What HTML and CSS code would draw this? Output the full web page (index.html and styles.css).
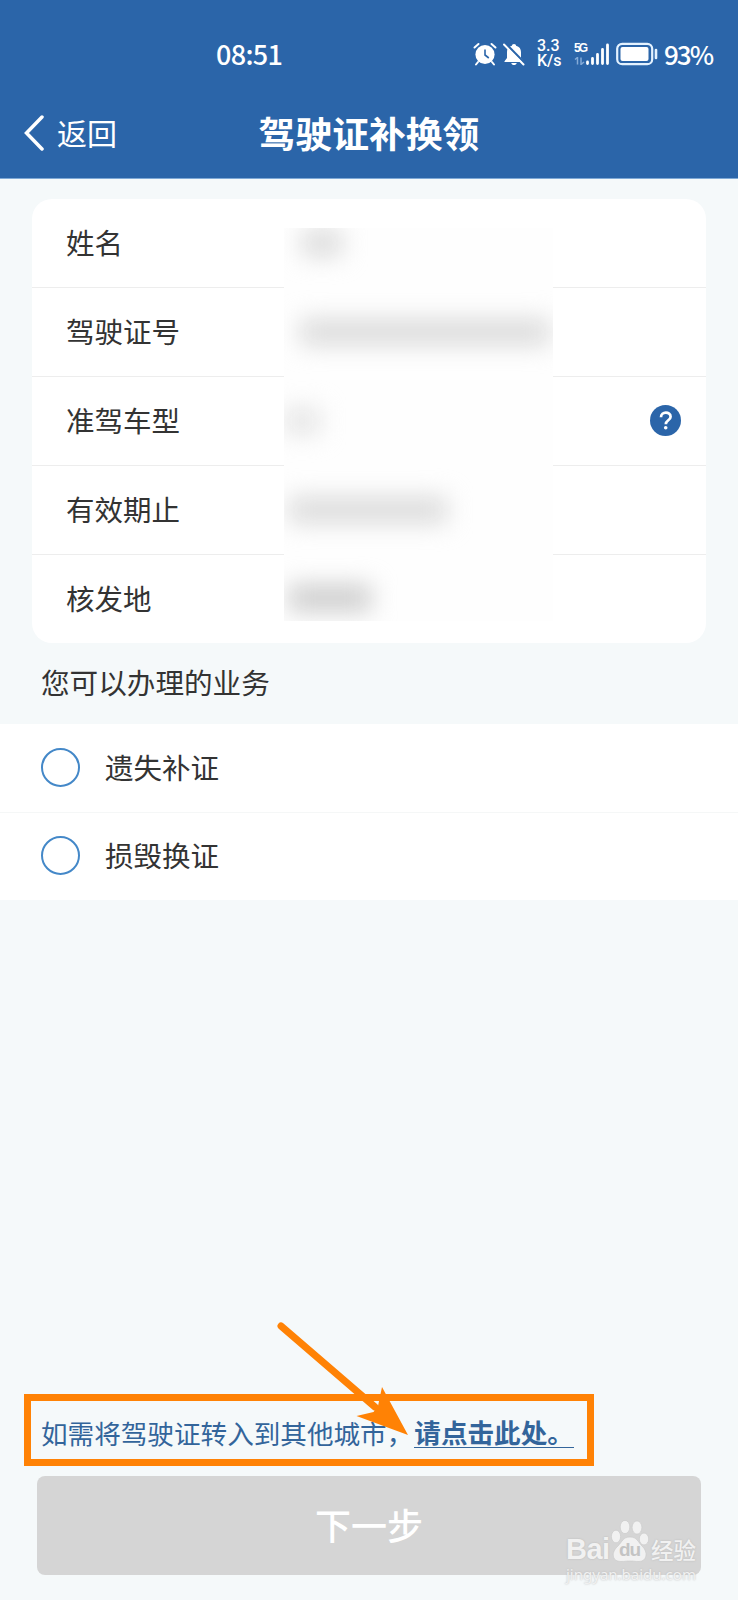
FILE: index.html
```html
<!DOCTYPE html>
<html lang="zh-CN">
<head>
  <meta charset="UTF-8">
  <title>驾驶证补换领</title>
  <link rel="stylesheet" href="styles.css">
</head>
<body>

<header class="header">
  <div class="status">
    <span class="time">08:51</span>
    <svg class="alarm" width="24" height="24" viewBox="0 0 24 24">
      <circle cx="12" cy="12.5" r="9.6" fill="#fff"/>
      <path d="M1.5 5.5 5.5 2M22.5 5.5 18.5 2M5 20l-2 2.5M19 20l2 2.5" stroke="#fff" stroke-width="2" stroke-linecap="round"/>
      <path d="M12 7.5v5.5l3.8 3" fill="none" stroke="#2b65a9" stroke-width="1.6"/>
    </svg>
    <svg class="bell" width="22" height="24" viewBox="0 0 22 24">
      <path d="M11 2c1.3 0 2 .8 2.1 1.7C16.5 4.6 18 7 18 10v6l2.5 3.3v.7H1.5v-.7L4 16v-6c0-3 1.5-5.4 4.9-6.3C9 2.800 9.700 2 11 2zM8.300 21h5.400c-.3 1.400-1.300 2-2.700 2s-2.400-.6-2.700-2z" fill="#fff"/>
      <path d="M2.500 1.500 22 21.500" stroke="#2b65a9" stroke-width="2.4"/>
      <path d="M1 2.500 20.500 22.500" stroke="#fff" stroke-width="2" stroke-linecap="round"/>
    </svg>
    <div class="speed">
      <span>3.3</span>
      <span>K/s</span>
    </div>
    <span class="network">5G
      <svg width="11" height="8" viewBox="0 0 11 8">
        <path d="M1 2.500 3.500.5v7M7 .5v7l3-2.500" fill="none" stroke="#85abd8" stroke-width="1.500"/>
      </svg>
    </span>
    <svg class="signal" width="23" height="22" viewBox="0 0 23 22">
      <path d="M1.500 20.500v-1.500M6.500 20.500v-5M11.500 20.500v-9M16.500 20.500v-14M21.500 20.500V2" stroke="#fff" stroke-width="2.800" stroke-linecap="round"/>
    </svg>
    <svg class="battery" width="42" height="24" viewBox="0 0 42 24">
      <rect x="1.200" y="1.800" width="35" height="20.400" rx="5" fill="none" stroke="#e4f2ff" stroke-width="2.200"/>
      <rect x="4.500" y="5" width="28" height="14" rx="2" fill="#fff"/>
      <path d="M40 8v8" stroke="#e4f2ff" stroke-width="2.600" stroke-linecap="round"/>
    </svg>
    <span class="percent">93%</span>
  </div>
  <div class="navbar">
    <a class="back">
      <svg width="20" height="36" viewBox="0 0 20 36">
        <path d="M18 2 2.500 18 18 34" fill="none" stroke="#fff" stroke-width="3.500" stroke-linecap="round"/>
      </svg>
      <span>返回</span>
    </a>
    <h1>驾驶证补换领</h1>
  </div>
</header>

<main class="content">
  <section class="card">
    <div class="row">姓名</div>
    <div class="row">驾驶证号</div>
    <div class="row">准驾车型
      <svg class="help" width="31" height="31" viewBox="0 0 31 31">
        <circle cx="15.500" cy="15.500" r="15.500" fill="#2b65a9"/>
        <path d="M11 12.200c0-6 9.600-5.800 9.600-.5 0 3.700-4.800 3.500-4.800 7.500" fill="none" stroke="#fff" stroke-width="2.700"/>
        <circle cx="15.700" cy="22.700" r="1.800" fill="#fff"/>
      </svg>
    </div>
    <div class="row">有效期止</div>
    <div class="row">核发地</div>
    <!-- hidden personal data -->
    <div class="mask">
      <i class="name"></i>
      <i class="number"></i>
      <i class="type"></i>
      <i class="date"></i>
      <i class="place"></i>
    </div>
  </section>

  <h2>您可以办理的业务</h2>

  <div class="options">
    <label class="option"><span class="radio"></span><span>遗失补证</span></label>
    <label class="option"><span class="radio"></span><span>损毁换证</span></label>
  </div>
</main>

<footer class="footer">
  <div class="tip">
    <span>如需将驾驶证转入到其他城市，</span><a>请点击此处。</a>
    <svg class="arrow" width="134" height="118" viewBox="0 0 134 118">
      <path d="M4 4 98 85" stroke="#ff8205" stroke-width="7" stroke-linecap="round"/>
      <path d="M131 113 79.500 94l17-4 4.500-6 4-19z" fill="#ff8205"/>
    </svg>
  </div>
  <button class="next">下一步</button>
  <div class="watermark">
    <div class="brand">
      <span class="bai">Bai</span>
      <span class="paw">
        <svg width="38" height="42" viewBox="0 0 38 42">
          <g fill="#f1f1f1" stroke="#c8c8c8" stroke-width=".6">
            <ellipse cx="5" cy="16.500" rx="4.600" ry="6.300"/>
            <ellipse cx="14" cy="7" rx="4.800" ry="6.600"/>
            <ellipse cx="26" cy="7.500" rx="4.900" ry="6.600"/>
            <ellipse cx="33" cy="19" rx="4.700" ry="5.900"/>
            <path d="M19 17c7 0 8 5 12 9 6.500 6 5 15.500-3 15.500-4 0-5-.5-9-.5s-5 .5-9 .5c-9.500 0-10-9.500-3-15.500C11 22 12 17 19 17z"/>
          </g>
        </svg>
        <b>du</b>
      </span>
      <span class="jingyan">经验</span>
    </div>
    <div class="url">jingyan.baidu.com</div>
  </div>
</footer>

</body>
</html>
```
FILE: styles.css
```css
* {
  box-sizing: border-box;
}

body {
  margin: 0;
  width: 738px;
  height: 1600px;
  display: flex;
  flex-direction: column;
  overflow: hidden;
  background: #f5f9fa;
  color: #333;
  font-family: "Noto Sans CJK SC", sans-serif;
  font-size: 28.5px;
}

.header {
  height: 179px;
  background: #2b65a9;
  border-bottom: 1px solid #7fa9d6;
  color: #fff;
}

.status {
  display: flex;
  align-items: center;
  height: 88px;
  padding: 19px 0 0 216px;
}

.time, .percent {
  font-size: 27px;
  font-weight: 500;
  line-height: 30px;
  letter-spacing: -0.7px;
}

.time {
  width: 257px;
}

.percent {
  font-size: 26px;
  letter-spacing: -2px;
}

.alarm {
  margin-right: 6px;
}

.speed {
  display: flex;
  flex-direction: column;
  gap: 3px;
  width: 37px;
  margin-left: 12px;
  font-family: Roboto, sans-serif;
  font-size: 16px;
  font-weight: 500;
  line-height: 12px;
}

.network {
  display: flex;
  flex-direction: column;
  gap: 3px;
  width: 12px;
  font-family: "Liberation Sans", sans-serif;
  font-size: 12px;
  font-weight: bold;
  line-height: 11px;
  letter-spacing: -2px;
}

.battery {
  margin: 0 6px 0 7px;
}

.navbar {
  position: relative;
  display: flex;
  align-items: center;
  height: 90px;
}

.back {
  display: flex;
  align-items: center;
  gap: 13px;
  padding-left: 24px;
  font-size: 30px;
}

.back span {
  padding-bottom: 2px;
}

h1 {
  position: absolute;
  left: 0;
  right: 0;
  margin: 0;
  padding-bottom: 2px;
  text-align: center;
  font-size: 36.8px;
  font-weight: bold;
  pointer-events: none;
}

.content {
  flex: 1;
}

.card {
  position: relative;
  margin: 20px 32px 0;
  background: #fff;
  border-radius: 20px;
}

.row {
  display: flex;
  align-items: center;
  justify-content: space-between;
  height: 89px;
  padding: 0 25px 3px 34px;
  border-bottom: 1px solid #ededed;
}

.row:nth-child(5) {
  height: 88px;
  border-bottom: none;
}

.help {
  position: relative;
  top: 1px;
}

.mask {
  position: absolute;
  left: 252px;
  top: 29px;
  width: 269px;
  height: 393px;
  overflow: hidden;
  background: #fefefe;
}

.mask i {
  position: absolute;
  height: 26px;
  background: #dadada;
  filter: blur(12px);
}

.mask .name {
  left: 18px;
  top: 2px;
  width: 40px;
}

.mask .number {
  left: 16px;
  top: 91px;
  width: 250px;
}

.mask .type {
  left: 0;
  top: 180px;
  width: 36px;
  background: #e4e4e4;
}

.mask .date {
  left: 5px;
  top: 269px;
  width: 158px;
}

.mask .place {
  left: 5px;
  top: 357px;
  width: 82px;
  background: #cbcbcb;
}

h2 {
  margin: 0;
  padding-left: 41px;
  height: 81px;
  line-height: 78px;
  font-size: 28.6px;
  font-weight: normal;
}

.options {
  background: #fff;
}

.option {
  display: flex;
  align-items: center;
  gap: 25px;
  height: 88px;
  padding: 0 0 2px 41px;
}

.option + .option {
  border-top: 1px solid #f5f7f7;
}

.option span + span {
  padding-bottom: 2px;
}

.radio {
  width: 39px;
  height: 39px;
  border: 2px solid #4488c8;
  border-radius: 50%;
}

.footer {
  position: relative;
  height: 206px;
}

.tip {
  position: relative;
  display: flex;
  align-items: center;
  width: 570px;
  height: 72px;
  margin-left: 24px;
  padding: 4px 0 0 10px;
  border: 7px solid #ff8205;
  color: #33659b;
  font-size: 26.6px;
  white-space: nowrap;
}

.tip a {
  margin-left: 1px;
  font-weight: bold;
  line-height: 30px;
  border-bottom: 1px solid #33659b;
}

.arrow {
  position: absolute;
  left: 246px;
  top: -79px;
}

.next {
  display: block;
  width: 664px;
  height: 99px;
  margin: 10px 0 0 37px;
  padding-bottom: 4px;
  border: none;
  border-radius: 8px;
  background: #d5d5d5;
  color: #fff;
  font-family: inherit;
  font-size: 36px;
  font-weight: 500;
}

.watermark {
  position: absolute;
  left: 566px;
  top: 126px;
  color: #f1f1f1;
}

.brand {
  display: flex;
  align-items: flex-end;
  height: 42px;
  text-shadow: 0 0 2px #b5b5b5;
}

.bai {
  width: 45px;
  font: bold 29px/25px "Liberation Sans", sans-serif;
  letter-spacing: -0.5px;
}

.paw {
  position: relative;
  height: 42px;
}

.paw b {
  position: absolute;
  left: 8px;
  top: 20px;
  color: #c4c4c4;
  font: bold 19px/20px "Liberation Sans", sans-serif;
  text-shadow: none;
  letter-spacing: -1px;
}

.jingyan {
  margin-left: 2px;
  font-size: 22.5px;
  font-weight: 500;
  line-height: 26px;
}

.url {
  margin-top: 3px;
  font: 15px/18px "Noto Sans", sans-serif;
  text-shadow: 0 0 2px #b5b5b5;
}
```
